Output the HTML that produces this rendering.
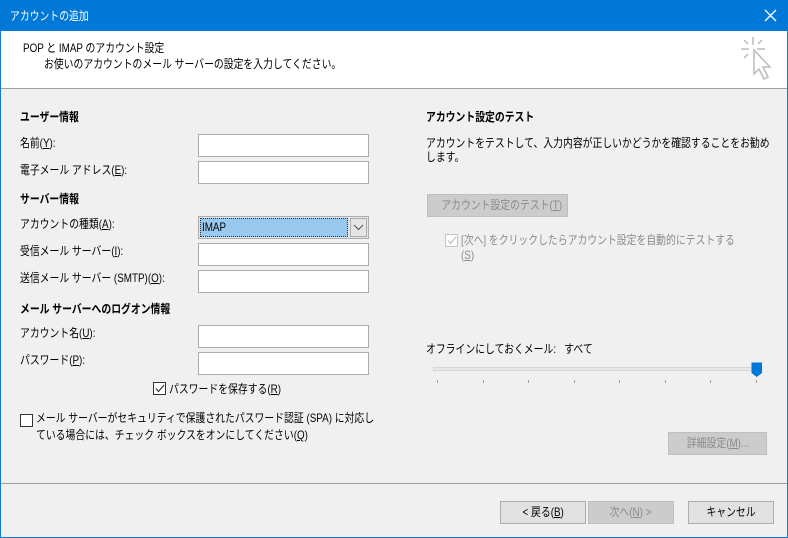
<!DOCTYPE html>
<html><head><meta charset="utf-8"><style>
*{box-sizing:border-box;margin:0;padding:0}
body{width:788px;height:538px;overflow:hidden;background:#f0f0f0;font-family:"Liberation Sans","Noto Sans CJK JP",sans-serif;font-size:12px;color:#000;position:relative}
.win{position:absolute;left:0;top:0;width:788px;height:538px;border:1px solid #1a79d0}
.a{position:absolute;white-space:nowrap;line-height:14px;transform:scaleX(0.82);transform-origin:0 0}
.b{font-weight:bold}
.in{position:absolute;background:#fff;border:1px solid #acacac;height:23px}
.btn{position:absolute;background:#e1e1e1;border:1px solid #adadad;height:23px;text-align:center;line-height:21px;white-space:nowrap}
.btn span{display:inline-block;transform:scaleX(0.82)}
.dis{background:#cccccc;border-color:#bfbfbf;color:#8a8a8a}
.cb{position:absolute;width:13px;height:13px;border:1px solid #333;background:#fff}
u{text-decoration:underline}
.tick{position:absolute;top:380px;width:1px;height:3px;background:#a0a0a0}
</style></head><body>
<div class="win"></div>
<div style="position:absolute;left:0;top:0;width:788px;height:31px;background:#0078d7"></div>
<div class="a" style="left:10px;top:9px;color:#fff">アカウントの追加</div>
<svg style="position:absolute;left:764px;top:9px" width="13" height="13"><path d="M1 1L12 12M12 1L1 12" stroke="#fff" stroke-width="1.3"/></svg>
<div style="position:absolute;left:1px;top:31px;width:786px;height:58px;background:#fff;border-bottom:1px solid #a0a0a0"></div>
<div class="a" style="left:23px;top:41px">POP と IMAP のアカウント設定</div>
<div class="a" style="left:44px;top:57px">お使いのアカウントのメール サーバーの設定を入力してください。</div>
<svg style="position:absolute;left:738px;top:34px" width="40" height="52"><g stroke="#bbb" stroke-width="1.5" fill="none"><path d="M15 3V11M3 15H11M6 6L10 10M24 6L20 10M6 24L10 20M19 15H27"/><path d="M16 16L16 40L21 35L26 45L30 43L25 33L32 33Z" fill="#fff"/></g></svg>

<div class="a b" style="left:20px;top:110px">ユーザー情報</div>
<div class="a" style="left:20px;top:136px">名前(<u>Y</u>):</div>
<div class="in" style="left:198px;top:134px;width:171px"></div>
<div class="a" style="left:20px;top:163px">電子メール アドレス(<u>E</u>):</div>
<div class="in" style="left:198px;top:161px;width:171px"></div>
<div class="a b" style="left:20px;top:192px">サーバー情報</div>
<div class="a" style="left:20px;top:217px">アカウントの種類(<u>A</u>):</div>
<div style="position:absolute;left:198px;top:216px;width:171px;height:23px;border:1px solid #acacac;background:#e5e5e5"></div>
<div style="position:absolute;left:200px;top:218px;width:148px;height:19px;background:#99c9ef;border:1px dotted #333"></div>
<div class="a" style="left:202px;top:220px">IMAP</div>
<div style="position:absolute;left:350px;top:218px;width:17px;height:19px;border:1px solid #acacac;background:#e5e5e5"></div>
<svg style="position:absolute;left:353px;top:224px" width="11" height="7"><path d="M1 1L5.5 5.5L10 1" stroke="#555" fill="none"/></svg>
<div class="a" style="left:20px;top:244px">受信メール サーバー(<u>I</u>):</div>
<div class="in" style="left:198px;top:243px;width:171px"></div>
<div class="a" style="left:20px;top:271px">送信メール サーバー (SMTP)(<u>O</u>):</div>
<div class="in" style="left:198px;top:270px;width:171px"></div>
<div class="a b" style="left:20px;top:302px">メール サーバーへのログオン情報</div>
<div class="a" style="left:20px;top:326px">アカウント名(<u>U</u>):</div>
<div class="in" style="left:198px;top:325px;width:171px"></div>
<div class="a" style="left:20px;top:353px">パスワード(<u>P</u>):</div>
<div class="in" style="left:198px;top:352px;width:171px"></div>
<div class="cb" style="left:153px;top:382px"></div>
<svg style="position:absolute;left:155px;top:384px" width="10" height="9"><path d="M1 4.5L3.5 7.5L9 1" stroke="#333" fill="none" stroke-width="1.2"/></svg>
<div class="a" style="left:169px;top:382px">パスワードを保存する(<u>R</u>)</div>
<div class="cb" style="left:20px;top:414px"></div>
<div class="a" style="left:36px;top:411px">メール サーバーがセキュリティで保護されたパスワード認証 (SPA) に対応し</div>
<div class="a" style="left:36px;top:428px">ている場合には、チェック ボックスをオンにしてください(<u>Q</u>)</div>

<div class="a b" style="left:426px;top:110px">アカウント設定のテスト</div>
<div class="a" style="left:426px;top:136px">アカウントをテストして、入力内容が正しいかどうかを確認することをお勧め</div>
<div class="a" style="left:426px;top:150px">します。</div>
<div class="btn dis" style="left:427px;top:194px;width:141px"><span>アカウント設定のテスト(<u>T</u>)</span></div>
<div class="cb" style="left:445px;top:234px;border-color:#c5c5c5"></div>
<svg style="position:absolute;left:447px;top:236px" width="10" height="9"><path d="M1 4.5L3.5 7.5L9 1" stroke="#bbb" fill="none" stroke-width="1.2"/></svg>
<div class="a" style="left:461px;top:233px;color:#8a8a8a">[次へ] をクリックしたらアカウント設定を自動的にテストする</div>
<div class="a" style="left:461px;top:248px;color:#8a8a8a">(<u>S</u>)</div>
<div class="a" style="left:426px;top:342px">オフラインにしておくメール:&nbsp;&nbsp;&nbsp;すべて</div>
<div style="position:absolute;left:433px;top:367px;width:327px;height:4px;background:#e7e7e7;border:1px solid #d6d6d6"></div>
<svg style="position:absolute;left:751px;top:362px" width="12" height="16"><path d="M0.5 0.5H11V11L5.75 15L0.5 11Z" fill="#0078d7"/></svg>
<div class="tick" style="left:437px"></div><div class="tick" style="left:483px"></div><div class="tick" style="left:528px"></div><div class="tick" style="left:574px"></div><div class="tick" style="left:619px"></div><div class="tick" style="left:665px"></div><div class="tick" style="left:710px"></div><div class="tick" style="left:756px"></div>
<div class="btn dis" style="left:668px;top:432px;width:99px"><span>詳細設定(<u>M</u>)...</span></div>

<div style="position:absolute;left:1px;top:483px;width:786px;height:1px;background:#a0a0a0"></div>
<div class="btn" style="left:500px;top:501px;width:86px"><span>&lt; 戻る(<u>B</u>)</span></div>
<div class="btn dis" style="left:588px;top:501px;width:86px"><span>次へ(<u>N</u>) &gt;</span></div>
<div class="btn" style="left:688px;top:501px;width:86px"><span>キャンセル</span></div>
</body></html>
